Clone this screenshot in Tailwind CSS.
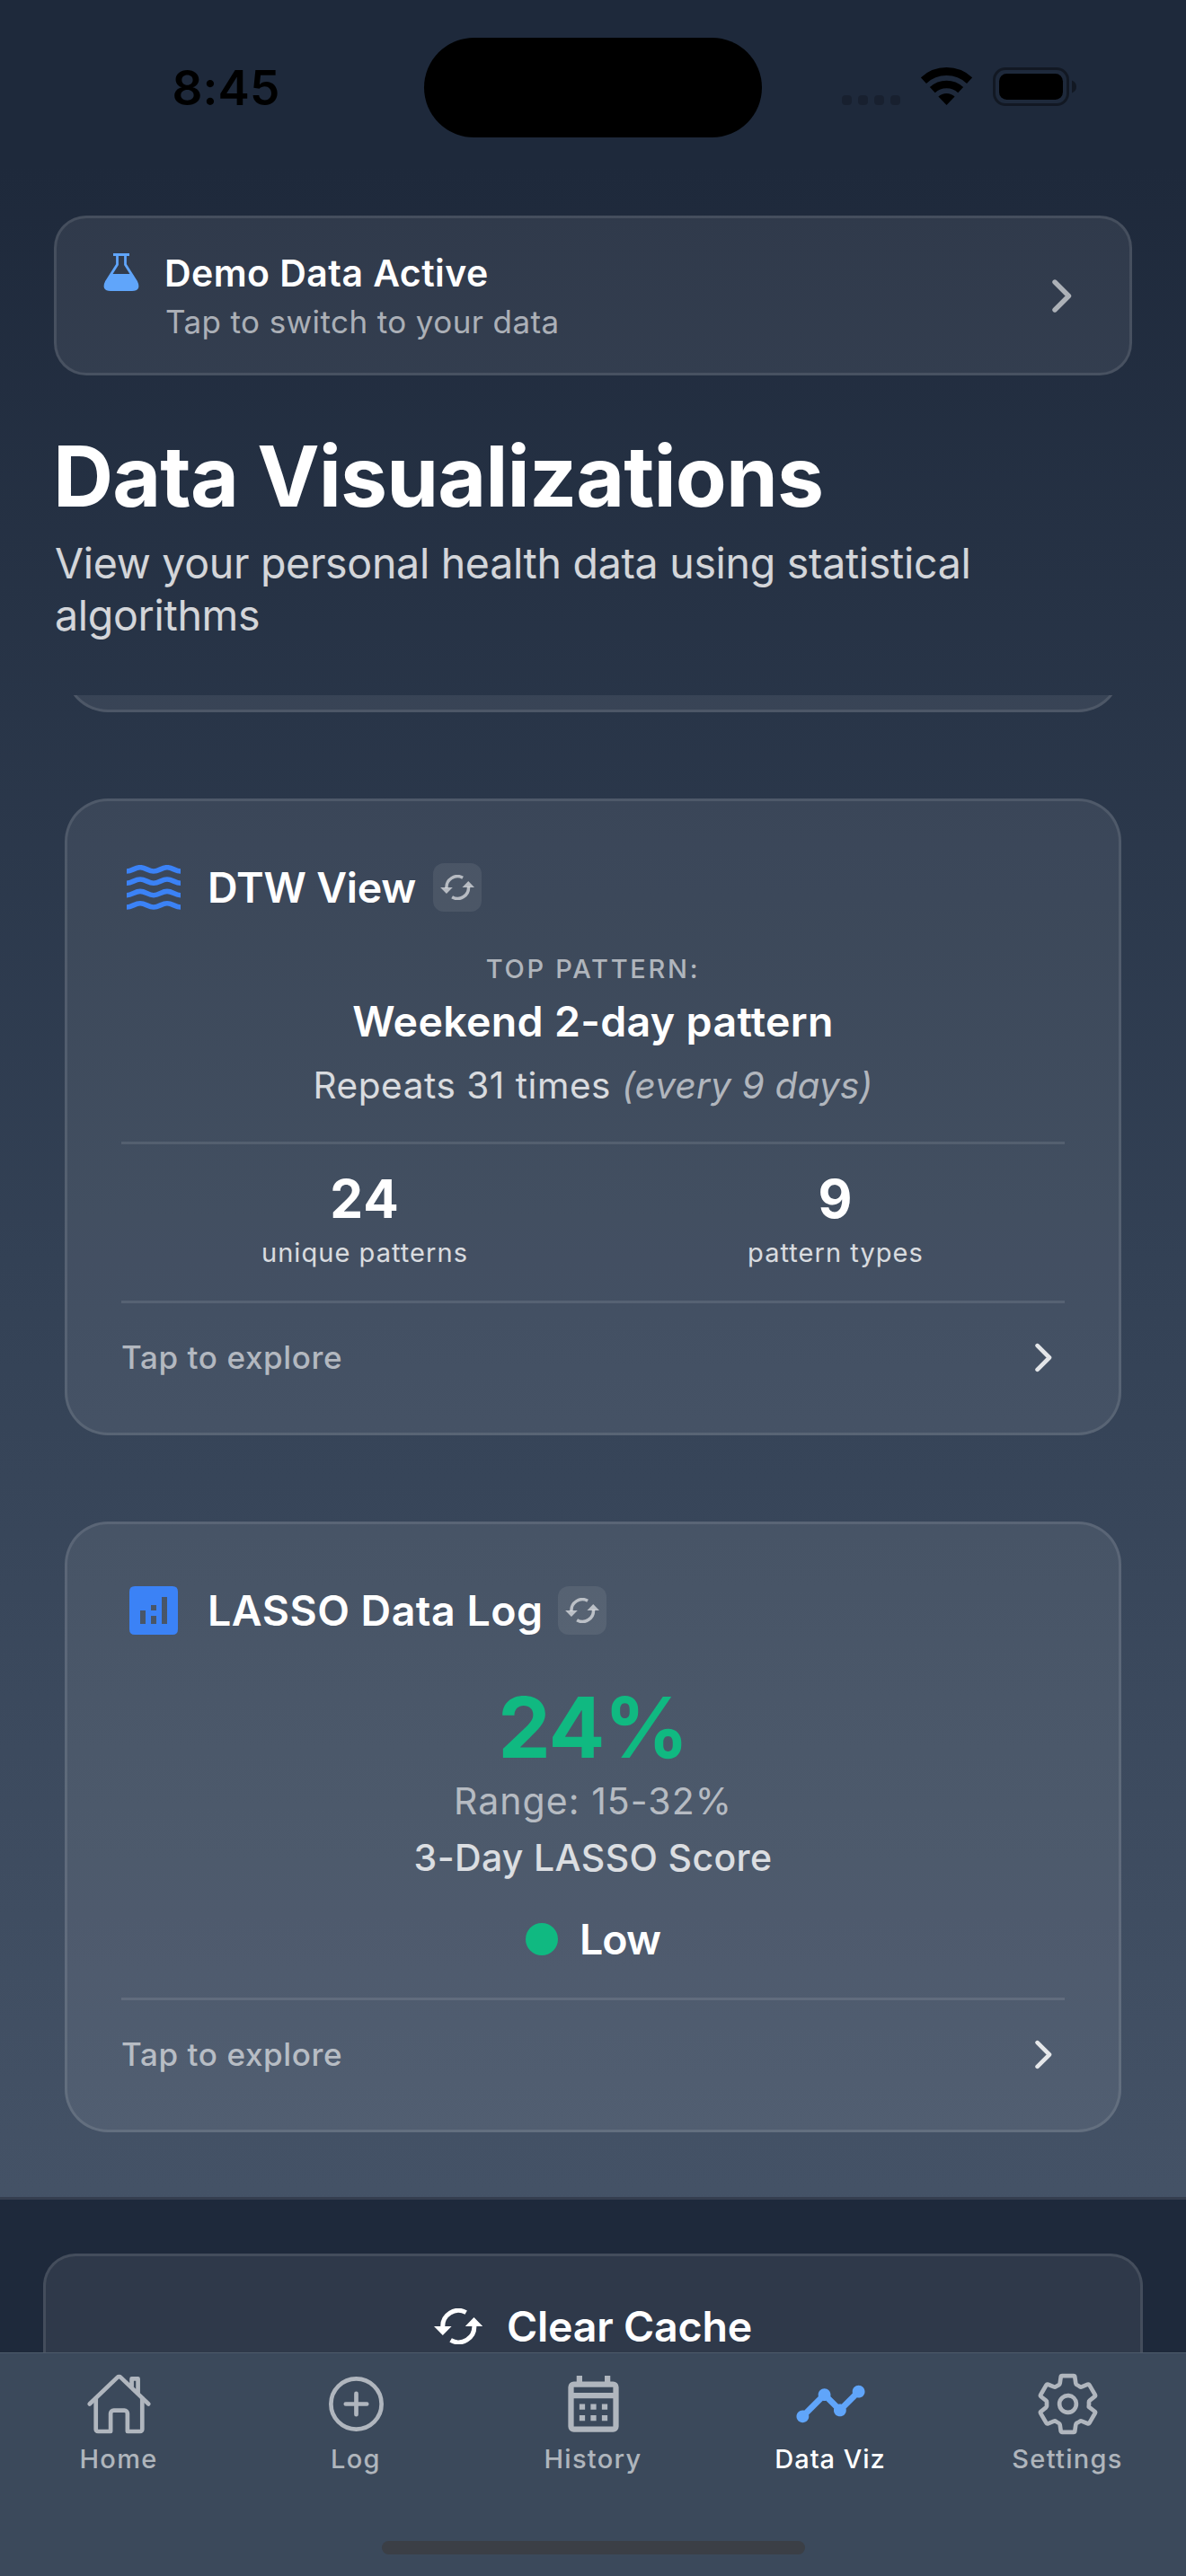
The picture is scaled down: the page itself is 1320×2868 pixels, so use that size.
<!DOCTYPE html>
<html lang="en">
<head>
<meta charset="utf-8">
<title>Data Visualizations</title>
<script src="https://cdn.jsdelivr.net/npm/@tailwindcss/browser@4"></script>
</head>
<body class="bg-[#1e293b] font-['Inter',sans-serif]">
<svg class="hidden">
  <symbol id="sync" viewBox="0 0 54 40">
    <path d="M9.8 21A17.5 17.5 0 0 1 35.7 4.6M44.8 19A17.5 17.5 0 0 1 18.6 35.4" fill="none" stroke="currentColor" stroke-width="5"/>
    <path d="M0 20H19.6L9.8 30ZM34.8 20H54.3L44.5 10Z" fill="currentColor"/>
  </symbol>
  <symbol id="chevron" viewBox="0 0 22 37">
    <path d="M3 3L18.5 18.5L3 34" fill="none" stroke="currentColor" stroke-width="5.4" stroke-linecap="round" stroke-linejoin="round"/>
  </symbol>
</svg>
<div class="relative flex h-[2868px] w-[1320px] flex-col overflow-hidden bg-[#1e293b]">

  <div class="flex h-[2446px] shrink-0 flex-col bg-[linear-gradient(to_bottom,#1e293b_0,#1e293b_186px,#334155_1402px,#475569_2619px)]">
    <!-- Status bar -->
    <div class="grid h-[240px] shrink-0 grid-cols-[472px_376px_472px] items-start pt-[42px]">
      <div class="pt-[24px] pl-[191.5px] text-[53px] leading-[64px] font-semibold tracking-[0.1px] text-black">8:45</div>
      <div class="h-[111px] rounded-[56px] bg-black"></div>
      <div class="flex pt-[33px] pl-[89px]">
        <div class="flex gap-[7px] pt-[31px]">
          <i class="size-[11px] rounded-[4px] bg-black/20"></i><i class="size-[11px] rounded-[4px] bg-black/20"></i><i class="size-[11px] rounded-[4px] bg-black/20"></i><i class="size-[11px] rounded-[4px] bg-black/20"></i>
        </div>
        <svg class="ml-[23px] h-[42px] w-[57px]" viewBox="0 0 57 42">
          <path d="M2.9 14.6A37.5 37.5 0 0 1 54.1 14.6" fill="none" stroke="#000" stroke-width="9"/>
          <path d="M12.8 25.2A23 23 0 0 1 44.2 25.2" fill="none" stroke="#000" stroke-width="8.6"/>
          <path d="M28.5 42L19.4 32.5A13.3 13.3 0 0 1 37.6 32.5Z"/>
        </svg>
        <svg class="ml-[23px] h-[43px] w-[93px]" viewBox="0 0 93 43">
          <rect x="1.5" y="1.5" width="82" height="40" rx="12.5" fill="none" stroke="#000" stroke-opacity=".4" stroke-width="3"/>
          <rect x="7" y="7" width="71" height="29" rx="8.5"/>
          <path d="M88 14.5Q93 16.5 93 21.5Q93 26.5 88 28.5Z" fill-opacity=".4"/>
        </svg>
      </div>
    </div>

    <!-- Demo banner -->
    <div class="mx-[60px] flex h-[178px] shrink-0 items-center rounded-[36px] border-[3px] border-white/10 bg-white/8 pr-[64px] pl-[52px]">
      <svg class="mb-[52px] h-[42px] w-[40px]" viewBox="0 0 40 42">
        <path d="M11 1.5H29" stroke="#60a5fa" stroke-width="3"/>
        <path d="M15.5 2V12.5L3.5 31.5Q-1 40.5 8 40.5H32Q41 40.5 36.5 31.5L24.5 12.5V2" fill="none" stroke="#60a5fa" stroke-width="2.8"/>
        <path d="M8.5 23H31.5L37 32.5Q41 41 32 41H8Q-1 41 3 32.5Z" fill="#60a5fa"/>
      </svg>
      <div class="ml-[28px] flex-1 pt-[4px]">
        <div class="text-[41px] leading-[54px] font-semibold tracking-[0.44px] text-white">Demo Data Active</div>
        <div class="pl-px text-[35px] leading-[54px] tracking-[0.4px] text-white/60">Tap to switch to your data</div>
      </div>
      <svg class="h-[37px] w-[22px] text-white/60"><use href="#chevron"/></svg>
    </div>

    <!-- Page heading -->
    <h1 class="mt-[56px] ml-[59px] shrink-0 text-[93px] leading-[112px] font-bold tracking-[-0.9px] text-white">Data Visualizations</h1>
    <p class="mt-[13px] ml-[61px] h-[115px] shrink-0 text-[46.5px] leading-[57.5px] tracking-[-0.3px] text-white/80">View your personal health data using statistical<br>algorithms</p>

    <!-- Scrolled-away card edge -->
    <div class="mt-[60px] flex h-[19px] shrink-0 items-end overflow-hidden px-[72px]">
      <div class="h-[150px] flex-1 shrink-0 rounded-[48px] border-[3px] border-white/10 bg-white/8"></div>
    </div>

    <!-- DTW card -->
    <div class="mx-[72px] mt-[96px] flex h-[709px] shrink-0 flex-col rounded-[48px] border-[3px] border-white/10 bg-white/8 px-[60px] pt-[60px]">
      <div class="flex h-[72px] items-center">
        <div class="flex w-[72px] justify-center">
          <svg class="h-[50px] w-[60px]" viewBox="0 0 60 50" fill="none" stroke="#3b82f6" stroke-width="5.6">
            <path d="M0 7C6 7 9 2.7 15 2.7S24 7 30 7S39 2.7 45 2.7S54 7 60 7"/>
            <path d="M0 20.3C6 20.3 9 16 15 16S24 20.3 30 20.3S39 16 45 16S54 20.3 60 20.3"/>
            <path d="M0 33.7C6 33.7 9 29.4 15 29.4S24 33.7 30 33.7S39 29.4 45 29.4S54 33.7 60 33.7"/>
            <path d="M0 47C6 47 9 42.7 15 42.7S24 47 30 47S39 42.7 45 42.7S54 47 60 47"/>
          </svg>
        </div>
        <div class="ml-[24px] w-[251px] text-[46.5px] leading-[56px] font-semibold tracking-[-0.2px] whitespace-nowrap text-white">DTW View</div>
        <div class="flex size-[54px] items-center justify-center rounded-[12px] bg-white/8"><svg class="h-[28px] w-[38px] text-white/60"><use href="#sync"/></svg></div>
      </div>
      <div class="mt-[35px] text-center text-[29px] leading-[40px] font-medium tracking-[2.7px] text-white/60">TOP PATTERN:</div>
      <div class="mt-[10px] text-center text-[46.5px] leading-[56px] font-semibold tracking-[0.33px] text-white">Weekend 2-day pattern</div>
      <div class="mt-[19px] text-center text-[40.5px] leading-[50px] tracking-[0.55px] text-white/80">Repeats 31 times <span class="tracking-[0.2px] text-white/60 italic">(every 9 days)</span></div>
      <div class="mt-[37px] h-[3px] bg-white/10"></div>
      <div class="mt-[25px] mr-[-7px] ml-[9px] grid grid-cols-2 text-center">
        <div><div class="text-[58.5px] leading-[72px] font-bold tracking-[1px] text-white">24</div><div class="mt-[6px] text-[29px] leading-[36px] tracking-[1.05px] text-white/80">unique patterns</div></div>
        <div><div class="text-[58.5px] leading-[72px] font-bold tracking-[1px] text-white">9</div><div class="mt-[6px] text-[29px] leading-[36px] tracking-[1.05px] text-white/80">pattern types</div></div>
      </div>
      <div class="mt-[35px] h-[3px] bg-white/10"></div>
      <div class="mt-[38px] flex h-[44px] items-center justify-between pr-[14px]">
        <div class="text-[35px] leading-[44px] font-medium tracking-[0.62px] text-white/60">Tap to explore</div>
        <svg class="h-[33px] w-[19px] text-white/85"><use href="#chevron"/></svg>
      </div>
    </div>

    <!-- LASSO card -->
    <div class="mx-[72px] mt-[96px] flex h-[680px] shrink-0 flex-col rounded-[48px] border-[3px] border-white/10 bg-white/8 px-[60px] pt-[60px]">
      <div class="flex h-[72px] items-center">
        <div class="flex w-[72px] justify-center">
          <svg class="size-[54px]" viewBox="0 0 54 54">
            <path fill="#3b82f6" fill-rule="evenodd" d="M6 0H48Q54 0 54 6V48Q54 54 48 54H6Q0 54 0 48V6Q0 0 6 0ZM12 27V42H18V27ZM24 21V27H30V21ZM24 33V42H30V33ZM36 12V42H42V12Z"/>
          </svg>
        </div>
        <div class="ml-[24px] w-[390px] text-[46.5px] leading-[56px] font-semibold tracking-[0.5px] whitespace-nowrap text-white">LASSO Data Log</div>
        <div class="flex size-[54px] items-center justify-center rounded-[12px] bg-white/8"><svg class="h-[28px] w-[38px] text-white/60"><use href="#sync"/></svg></div>
      </div>
      <div class="mt-[38px] text-center text-[93px] leading-[112px] font-bold tracking-[-1px] text-[#10b981]">24%</div>
      <div class="mt-px text-center text-[41px] leading-[50px] tracking-[1.05px] text-white/60">Range: 15-32%</div>
      <div class="mt-[13px] text-center text-[41px] leading-[50px] font-medium tracking-[0.35px] text-white/80">3-Day LASSO Score</div>
      <div class="mt-[38px] flex items-center justify-center gap-[24px]">
        <i class="size-[36px] rounded-full bg-[#10b981]"></i>
        <div class="text-[46.5px] leading-[56px] font-semibold tracking-[-0.9px] text-white">Low</div>
      </div>
      <div class="mt-[37px] h-[3px] bg-white/10"></div>
      <div class="mt-[38px] flex h-[44px] items-center justify-between pr-[14px]">
        <div class="text-[35px] leading-[44px] font-medium tracking-[0.62px] text-white/60">Tap to explore</div>
        <svg class="h-[33px] w-[19px] text-white/85"><use href="#chevron"/></svg>
      </div>
    </div>
  </div>

  <!-- Footer action -->
  <div class="flex h-[173px] shrink-0 flex-col overflow-hidden border-t-[3px] border-white/10 px-[48px] pt-[60px]">
    <div class="flex h-[180px] shrink-0 items-start justify-center gap-[27px] rounded-[36px] border-[3px] border-white/10 bg-white/8 pt-[50px]">
      <svg class="mt-[8px] h-[40px] w-[54px] text-white"><use href="#sync"/></svg>
      <div class="text-[46.5px] leading-[56px] font-semibold tracking-[-0.2px] text-white">Clear Cache</div>
    </div>
  </div>

  <!-- Tab bar -->
  <div class="grid h-[249px] shrink-0 grid-cols-5 border-t border-[#4e5b6b] bg-[#3b495b] pt-[19px] text-center text-[29px] leading-[36px] font-medium tracking-[1.3px] text-white/60">
    <div class="flex flex-col items-center">
      <svg class="size-[75px]" viewBox="0 0 512 512" fill="none" stroke="#b0b6be" stroke-width="32" stroke-linecap="round" stroke-linejoin="round"><path d="M80 212v236a16 16 0 0016 16h96V328a24 24 0 0124-24h80a24 24 0 0124 24v136h96a16 16 0 0016-16V212"/><path d="M480 256L266.89 52c-5-5.28-16.69-5.34-21.78 0L32 256M400 179V64h-48v69"/></svg>
      <div class="mt-[6px]">Home</div>
    </div>
    <div class="flex flex-col items-center">
      <svg class="size-[75px]" viewBox="0 0 512 512" fill="none" stroke="#b0b6be" stroke-width="32" stroke-linecap="round"><circle cx="256" cy="256" r="192"/><path d="M256 176v160M336 256H176"/></svg>
      <div class="mt-[6px]">Log</div>
    </div>
    <div class="flex flex-col items-center">
      <svg class="size-[75px]" viewBox="0 0 24 24" fill="#b0b6be"><path fill-rule="evenodd" d="M6 1.9H8V4H16V1.9H18V4H19A2 2 0 0 1 21 6V20A2 2 0 0 1 19 22H5A2 2 0 0 1 3 20V6A2 2 0 0 1 5 4H6ZM5 6V8H19V6ZM5 10V20H19V10ZM7 12H9V14H7ZM11 12H13V14H11ZM15 12H17V14H15ZM7 16H9V18H7ZM11 16H13V18H11ZM15 16H17V18H15Z"/></svg>
      <div class="mt-[6px]">History</div>
    </div>
    <div class="flex flex-col items-center">
      <svg class="-my-[4px] size-[83px]" viewBox="0 0 24 24" fill="#60a5fa"><path d="M23 8c0 1.1-.9 2-2 2-.18 0-.35-.02-.51-.07l-3.56 3.55c.05.16.07.34.07.52 0 1.1-.9 2-2 2s-2-.9-2-2c0-.18.02-.36.07-.52l-2.55-2.55c-.16.05-.34.07-.52.07s-.36-.02-.52-.07l-4.55 4.56c.05.16.07.33.07.51 0 1.1-.9 2-2 2s-2-.9-2-2 .9-2 2-2c.18 0 .35.02.51.07l4.56-4.55C8.02 9.36 8 9.18 8 9c0-1.1.9-2 2-2s2 .9 2 2c0 .18-.02.36-.07.52l2.55 2.55c.16-.05.34-.07.52-.07s.36.02.52.07l3.55-3.56C19.02 8.35 19 8.18 19 8c0-1.1.9-2 2-2s2 .9 2 2z"/></svg>
      <div class="mt-[6px] tracking-[0.95px] text-white">Data Viz</div>
    </div>
    <div class="flex flex-col items-center">
      <svg class="size-[75px]" viewBox="0 0 512 512" fill="none" stroke="#b0b6be" stroke-width="32" stroke-linecap="round" stroke-linejoin="round"><path d="M262.29 192.31a64 64 0 1057.4 57.4 64.13 64.13 0 00-57.4-57.4zM416.39 256a154.34 154.34 0 01-1.53 20.79l45.21 35.46a10.81 10.81 0 012.45 13.75l-42.77 74a10.81 10.81 0 01-13.14 4.59l-44.9-18.08a16.11 16.11 0 00-15.17 1.75A164.48 164.48 0 01325 400.8a15.94 15.94 0 00-8.82 12.14l-6.73 47.89a11.08 11.08 0 01-10.68 9.17h-85.54a11.11 11.11 0 01-10.69-8.87l-6.72-47.82a16.07 16.07 0 00-9-12.22 155.3 155.3 0 01-21.46-12.57 16 16 0 00-15.11-1.71l-44.89 18.07a10.81 10.81 0 01-13.14-4.58l-42.77-74a10.8 10.8 0 012.45-13.75l38.21-30a16.05 16.05 0 006-14.08c-.36-4.17-.58-8.33-.58-12.5s.21-8.27.58-12.35a16 16 0 00-6.07-13.94l-38.19-30A10.81 10.81 0 0149.48 186l42.77-74a10.81 10.81 0 0113.14-4.59l44.9 18.08a16.11 16.11 0 0015.17-1.75A164.48 164.48 0 01187 111.2a15.94 15.94 0 008.82-12.14l6.73-47.89A11.08 11.08 0 01213.23 42h85.54a11.11 11.11 0 0110.69 8.87l6.72 47.82a16.07 16.07 0 009 12.22 155.3 155.3 0 0121.46 12.57 16 16 0 0015.11 1.71l44.89-18.07a10.81 10.81 0 0113.14 4.58l42.77 74a10.8 10.8 0 01-2.45 13.75l-38.21 30a16.05 16.05 0 00-6.05 14.08c.33 4.14.55 8.3.55 12.47z"/></svg>
      <div class="mt-[6px]">Settings</div>
    </div>
  </div>

  <!-- Home indicator -->
  <div class="absolute bottom-[24px] left-[425px] h-[15px] w-[471px] rounded-full bg-[#3b3f46]"></div>
</div>
</body>
</html>
